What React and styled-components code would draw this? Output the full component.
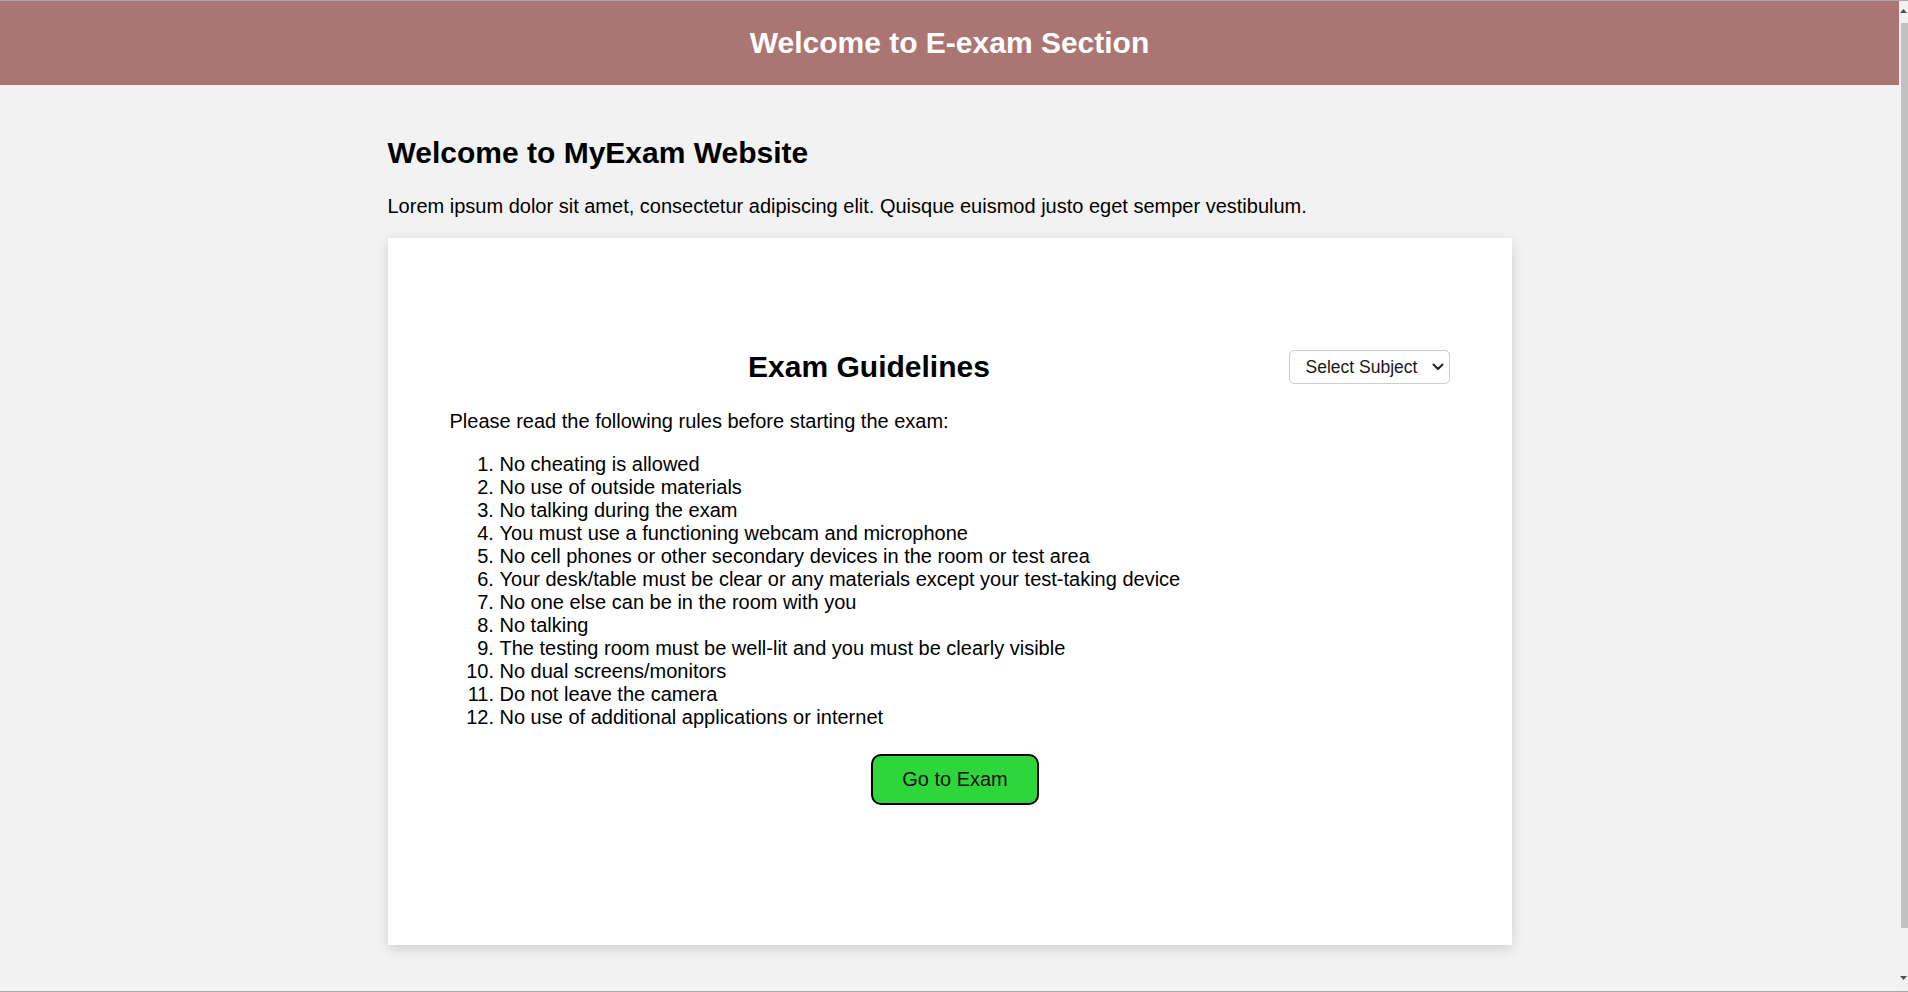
import React, { useState } from 'react';
import styled, { createGlobalStyle } from 'styled-components';

const GlobalStyle = createGlobalStyle`
    html, body {
        margin: 0;
        padding: 0;
        height: 100%;
        overflow: hidden;
    }
    body {
        font-family: "Liberation Sans", Arial, sans-serif;
        color: #000;
        background: #f2f2f2;
    }
`

const Frame = styled.div`
    height: 100vh;
    display: flex;
    flex-direction: column;
`

const Rule = styled.div`
    height: 1px;
    flex: none;
    background: #a9a9a9;
`

const Viewport = styled.div`
    flex: 1;
    display: flex;
    min-height: 0;
`

const Page = styled.div`
    flex: 1;
    display: flex;
    flex-direction: column;
    background: #f2f2f2;
`

const Header = styled.header`
    height: 84px;
    flex: none;
    display: flex;
    align-items: center;
    justify-content: center;
    background: #ab7573;
`

const HeaderTitle = styled.h1`
    margin: 0;
    font-size: 30px;
    line-height: 34.5px;
    font-weight: bold;
    color: #fff;
`

const Main = styled.main`
    width: 1124px;
    margin: 0 auto;
    padding-top: 51px;
`

const SiteTitle = styled.h2`
    margin: 0;
    font-size: 30px;
    line-height: 34.5px;
    font-weight: bold;
`

const Intro = styled.p`
    margin: 24px 0 0;
    font-size: 20px;
    line-height: 23px;
`

const Card = styled.section`
    margin-top: 20px;
    background: #fff;
    padding: 112px 62px 140px;
    box-shadow: 0 4px 12px rgba(0, 0, 0, 0.14);
`

const CardHead = styled.div`
    display: flex;
    align-items: center;
`

const CardTitle = styled.h3`
    flex: 1;
    margin: 0;
    text-align: center;
    font-size: 30px;
    line-height: 34.5px;
    font-weight: bold;
`

const SelectWrap = styled.div`
    position: relative;
    width: 161px;
    height: 34px;
`

const Select = styled.select`
    appearance: none;
    width: 100%;
    height: 100%;
    box-sizing: border-box;
    padding: 0 30px 0 16px;
    border: 1px solid #cfcfcf;
    border-radius: 5px;
    background: #fff;
    font-family: "Liberation Sans", Arial, sans-serif;
    font-size: 17.5px;
    color: #1a1a1a;
    outline: none;
`

const Chevron = styled.svg`
    position: absolute;
    right: 6px;
    top: 13px;
    pointer-events: none;
`

const Lead = styled.p`
    margin: 26px 0 0;
    font-size: 20px;
    line-height: 23px;
`

const Rules = styled.ol`
    margin: 20px 0 0;
    padding-left: 50px;
    font-size: 20px;
    line-height: 23px;
`

const Actions = styled.div`
    display: flex;
    justify-content: center;
    padding-left: 11px;
    margin-top: 25px;
`

const GoButton = styled.button`
    height: 51px;
    width: 168px;
    box-sizing: border-box;
    border: 2px solid #000;
    border-radius: 10px;
    background: #2fd63b;
    color: #111;
    font-family: "Liberation Sans", Arial, sans-serif;
    font-size: 20px;
    cursor: pointer;
`

const ScrollTrack = styled.div`
    width: 9px;
    flex: none;
    background: #f1f1f1;
    display: flex;
    flex-direction: column;
    align-items: flex-end;
`

const ScrollArrow = styled.svg`
    flex: none;
    margin: ${p => p.$top ? '8px 1px 0 0' : '0 1px 0 0'};
`

const ScrollThumb = styled.div`
    width: 7px;
    height: 905px;
    margin: 10px 0 48px;
    background: #c1c1c1;
`

const guidelines = [
    'No cheating is allowed',
    'No use of outside materials',
    'No talking during the exam',
    'You must use a functioning webcam and microphone',
    'No cell phones or other secondary devices in the room or test area',
    'Your desk/table must be clear or any materials except your test-taking device',
    'No one else can be in the room with you',
    'No talking',
    'The testing room must be well-lit and you must be clearly visible',
    'No dual screens/monitors',
    'Do not leave the camera',
    'No use of additional applications or internet',
];

const App = () => {
    const [subject, setSubject] = useState('');

    return (
        <Frame>
            <GlobalStyle />
            <Rule />
            <Viewport>
                <Page>
                    <Header>
                        <HeaderTitle>Welcome to E-exam Section</HeaderTitle>
                    </Header>
                    <Main>
                        <SiteTitle>Welcome to MyExam Website</SiteTitle>
                        <Intro>Lorem ipsum dolor sit amet, consectetur adipiscing elit. Quisque euismod justo eget semper vestibulum.</Intro>
                        <Card>
                            <CardHead>
                                <CardTitle>Exam Guidelines</CardTitle>
                                <SelectWrap>
                                    <Select value={subject} onChange={(e) => setSubject(e.target.value)}>
                                        <option value="">Select Subject</option>
                                        <option value="math">Mathematics</option>
                                        <option value="physics">Physics</option>
                                        <option value="chemistry">Chemistry</option>
                                    </Select>
                                    <Chevron width="12" height="8" viewBox="0 0 12 8">
                                        <polyline points="1.5,1.5 6,6 10.5,1.5" fill="none" stroke="#222" strokeWidth="2" strokeLinecap="round" strokeLinejoin="round" />
                                    </Chevron>
                                </SelectWrap>
                            </CardHead>
                            <Lead>Please read the following rules before starting the exam:</Lead>
                            <Rules>
                                {guidelines.map((rule) => (
                                    <li key={rule}>{rule}</li>
                                ))}
                            </Rules>
                            <Actions>
                                <GoButton type="button">Go to Exam</GoButton>
                            </Actions>
                        </Card>
                    </Main>
                </Page>
                <ScrollTrack>
                    <ScrollArrow $top width="7" height="4" viewBox="0 0 7 4">
                        <polygon points="0,4 3.5,0 7,4" fill="#505050" />
                    </ScrollArrow>
                    <ScrollThumb />
                    <ScrollArrow width="7" height="4" viewBox="0 0 7 4">
                        <polygon points="0,0 3.5,4 7,0" fill="#505050" />
                    </ScrollArrow>
                </ScrollTrack>
            </Viewport>
            <Rule />
        </Frame>
    );
}

export default App
